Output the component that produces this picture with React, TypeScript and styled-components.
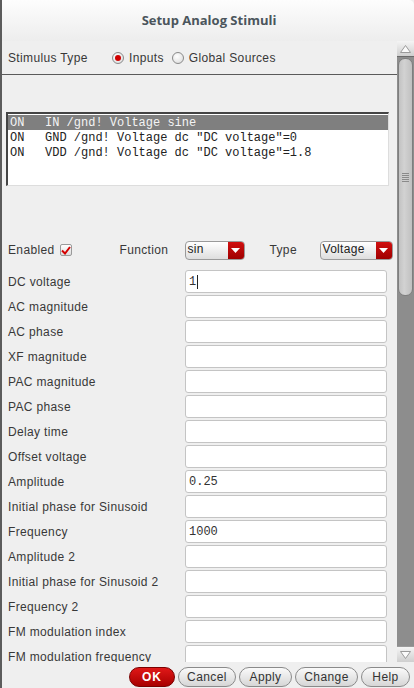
import React from "react";
import styled, { createGlobalStyle } from "styled-components";

const Global = createGlobalStyle`
  html, body { margin: 0; padding: 0; background: #efefef; }
  body { font-family: "Liberation Sans", Arial, sans-serif; }
  * { box-sizing: border-box; }
`;

const Window = styled.div`
  width: 414px;
  height: 688px;
  display: flex;
  flex-direction: column;
  background: #efefef;
  border-left: 2px solid #5c5c5c;
  overflow: hidden;
`;

const TitleBar = styled.div`
  height: 41px;
  flex: none;
  display: flex;
  align-items: center;
  justify-content: center;
  background: linear-gradient(#fdfdfd, #ededed);
  border-top-right-radius: 5px;
  font-family: "Open Sans", sans-serif;
  font-weight: 700;
  font-size: 13px;
  color: #4b555c;
  padding-left: 2px;
  padding-bottom: 1px;
`;

const Body = styled.div`
  flex: 1;
  display: flex;
  min-height: 0;
`;

const Content = styled.div`
  flex: 1;
  overflow: hidden;
  display: flex;
  flex-direction: column;
`;

const TypeRow = styled.div`
  height: 34px;
  display: flex;
  align-items: center;
  padding-left: 6px;
  border-bottom: 1px solid #5a5a5a;
  flex: none;
`;

const Label = styled.span<{ $w?: number }>`
  font-size: 12px;
  letter-spacing: 0.35px;
  color: #383838;
  white-space: nowrap;
  ${(p) => (p.$w ? `width: ${p.$w}px; flex: none;` : "")}
`;

const RadioWrap = styled.label`
  display: flex;
  align-items: center;
  gap: 5px;
  margin-right: 8px;
`;

const RadioDot = styled.span<{ $on?: boolean }>`
  width: 12px;
  height: 12px;
  border-radius: 50%;
  border: 1px solid #8a8a8a;
  background: radial-gradient(circle at 40% 35%, #ffffff, #d8d8d8);
  display: flex;
  align-items: center;
  justify-content: center;
  &::after {
    content: "";
    width: 6px;
    height: 6px;
    border-radius: 50%;
    background: ${(p) => (p.$on ? "#d00000" : "transparent")};
  }
`;

const ListBox = styled.div`
  margin: 37px 8px 0 4px;
  height: 74px;
  background: #fff;
  border-top: 2px solid #444;
  border-left: 2px solid #444;
  border-right: 1px solid #ddd;
  border-bottom: 1px solid #ddd;
  padding-top: 1px;
  flex: none;
`;

const ListRow = styled.div<{ $sel?: boolean }>`
  height: 15px;
  display: flex;
  align-items: center;
  font-family: "Liberation Mono", "Courier New", monospace;
  font-size: 12px;
  color: ${(p) => (p.$sel ? "#f4f4f4" : "#222")};
  background: ${(p) => (p.$sel ? "#7f7f7f" : "transparent")};
  white-space: pre;
  padding-left: 2px;
`;

const Col = styled.span<{ $w?: number }>`
  ${(p) => (p.$w ? `width: ${p.$w}px; flex: none;` : "")}
`;

const ControlRow = styled.div`
  margin-top: 52px;
  height: 24px;
  display: flex;
  align-items: center;
  padding-left: 6px;
  flex: none;
`;

const Check = styled.span`
  width: 12px;
  height: 12px;
  border: 1px solid #9a9a9a;
  border-radius: 2px;
  background: linear-gradient(#ffffff, #dcdcdc);
  display: flex;
  align-items: center;
  justify-content: center;
  margin-left: 5px;
  margin-right: 48px;
`;

const Select = styled.div<{ $w: number }>`
  width: ${(p) => p.$w}px;
  height: 19px;
  border: 1px solid #9a9a9a;
  border-radius: 4px;
  display: flex;
  overflow: hidden;
  background: linear-gradient(#ffffff, #dedede);
  flex: none;
`;

const SelectText = styled.span`
  flex: 1;
  font-size: 12px;
  letter-spacing: 0.3px;
  color: #222;
  padding-left: 2px;
  line-height: 15px;
`;

const SelectArrow = styled.span`
  width: 16px;
  background: linear-gradient(#d01010, #a00000);
  display: flex;
  align-items: center;
  justify-content: center;
`;

const Fields = styled.div`
  display: flex;
  flex-direction: column;
  gap: 2px;
  margin-top: 8px;
`;

const FieldRow = styled.div`
  height: 23px;
  display: flex;
  align-items: center;
  padding-left: 6px;
  flex: none;
`;

const Input = styled.div`
  width: 202px;
  height: 23px;
  margin-left: auto;
  margin-right: 10px;
  background: #fff;
  border: 1px solid #c4c4c4;
  border-radius: 3px;
  font-family: "Liberation Mono", "Courier New", monospace;
  font-size: 12px;
  color: #333;
  display: flex;
  align-items: center;
  padding-left: 3px;
  white-space: pre;
`;

const Caret = styled.span`
  width: 1px;
  height: 14px;
  background: #222;
  margin-left: 1px;
`;

const Scrollbar = styled.div`
  width: 17px;
  flex: none;
  background: #8d8d8d;
  display: flex;
  flex-direction: column;
`;

const ArrowBox = styled.div`
  height: 16px;
  flex: none;
  background: linear-gradient(#f4f4f4, #cfcfcf);
  border-bottom: 1px solid #6a6a6a;
  display: flex;
  align-items: center;
  justify-content: center;
`;

const ArrowBoxDown = styled(ArrowBox)`
  border-bottom: none;
  border-top: 1px solid #9a9a9a;
  margin-top: auto;
`;

const Thumb = styled.div`
  height: 238px;
  margin: 1px 1px 0 1px;
  border-radius: 7px;
  background: linear-gradient(90deg, #c2c2c2, #d2d2d2 40%, #c0c0c0);
  border: 1px solid #7e7e7e;
  display: flex;
  align-items: center;
  justify-content: center;
`;

const ButtonBar = styled.div`
  height: 26px;
  flex: none;
  display: flex;
  justify-content: flex-end;
  align-items: flex-start;
  gap: 3px;
  padding-right: 4px;
  padding-top: 5px;
`;

const Button = styled.button<{ $primary?: boolean; $w: number }>`
  width: ${(p) => p.$w}px;
  height: 20px;
  border-radius: 10px;
  border: 1px solid ${(p) => (p.$primary ? "#7a0000" : "#8a8a8a")};
  background: ${(p) =>
    p.$primary
      ? "linear-gradient(#e01818, #a80000)"
      : "linear-gradient(#fafafa, #d6d6d6)"};
  color: ${(p) => (p.$primary ? "#fff" : "#333")};
  font-family: "Liberation Sans", Arial, sans-serif;
  font-weight: ${(p) => (p.$primary ? 700 : 400)};
  font-size: 12px;
  letter-spacing: ${(p) => (p.$primary ? "1px" : "0.4px")};
  padding: 0;
  display: flex;
  align-items: center;
  justify-content: center;
`;

const fields: [string, string, boolean?][] = [
  ["DC voltage", "1", true],
  ["AC magnitude", ""],
  ["AC phase", ""],
  ["XF magnitude", ""],
  ["PAC magnitude", ""],
  ["PAC phase", ""],
  ["Delay time", ""],
  ["Offset voltage", ""],
  ["Amplitude", "0.25"],
  ["Initial phase for Sinusoid", ""],
  ["Frequency", "1000"],
  ["Amplitude 2", ""],
  ["Initial phase for Sinusoid 2", ""],
  ["Frequency 2", ""],
  ["FM modulation index", ""],
  ["FM modulation frequency", ""],
];

const DownTri = () => (
  <svg width="9" height="5" viewBox="0 0 9 5">
    <path d="M0 0 H9 L4.5 5 Z" fill="#fff" />
  </svg>
);

export default function App() {
  return (
    <>
      <Global />
      <Window>
        <TitleBar>Setup Analog Stimuli</TitleBar>
        <Body>
          <Content>
            <TypeRow>
              <Label $w={104}>Stimulus Type</Label>
              <RadioWrap>
                <RadioDot $on />
                <Label>Inputs</Label>
              </RadioWrap>
              <RadioWrap>
                <RadioDot />
                <Label>Global Sources</Label>
              </RadioWrap>
            </TypeRow>
            <ListBox>
              <ListRow $sel>
                <Col $w={35}>ON</Col>
                <Col>IN /gnd! Voltage sine</Col>
              </ListRow>
              <ListRow>
                <Col $w={35}>ON</Col>
                <Col>GND /gnd! Voltage dc "DC voltage"=0</Col>
              </ListRow>
              <ListRow>
                <Col $w={35}>ON</Col>
                <Col>VDD /gnd! Voltage dc "DC voltage"=1.8</Col>
              </ListRow>
            </ListBox>
            <ControlRow>
              <Label>Enabled</Label>
              <Check>
                <svg width="10" height="9" viewBox="0 0 10 9">
                  <path d="M1 4.5 L4 7.5 L9 1" stroke="#d40000" strokeWidth="2" fill="none" />
                </svg>
              </Check>
              <Label $w={65}>Function</Label>
              <Select $w={60}>
                <SelectText>sin</SelectText>
                <SelectArrow>
                  <DownTri />
                </SelectArrow>
              </Select>
              <Label $w={50} style={{ marginLeft: 25 }}>
                Type
              </Label>
              <Select $w={73}>
                <SelectText>Voltage</SelectText>
                <SelectArrow>
                  <DownTri />
                </SelectArrow>
              </Select>
            </ControlRow>
            <Fields>
              {fields.map(([l, v, caret]) => (
                <FieldRow key={l}>
                  <Label>{l}</Label>
                  <Input>
                    {v}
                    {caret && <Caret />}
                  </Input>
                </FieldRow>
              ))}
            </Fields>
          </Content>
          <Scrollbar>
            <ArrowBox>
              <svg width="11" height="8" viewBox="0 0 11 8">
                <path d="M0.5 7.5 L5.5 0.5 L10.5 7.5 Z" fill="#fafafa" stroke="#9a9a9a" />
              </svg>
            </ArrowBox>
            <Thumb>
              <svg width="7" height="9" viewBox="0 0 7 9">
                <path d="M0 0.5H7M0 2.5H7M0 4.5H7M0 6.5H7M0 8.5H7" stroke="#8a8a8a" />
              </svg>
            </Thumb>
            <ArrowBoxDown>
              <svg width="11" height="8" viewBox="0 0 11 8">
                <path d="M0.5 0.5 L5.5 7.5 L10.5 0.5 Z" fill="#fafafa" stroke="#9a9a9a" />
              </svg>
            </ArrowBoxDown>
          </Scrollbar>
        </Body>
        <ButtonBar>
          <Button $primary $w={46}>OK</Button>
          <Button $w={58}>Cancel</Button>
          <Button $w={53}>Apply</Button>
          <Button $w={63}>Change</Button>
          <Button $w={49}>Help</Button>
        </ButtonBar>
      </Window>
    </>
  );
}
